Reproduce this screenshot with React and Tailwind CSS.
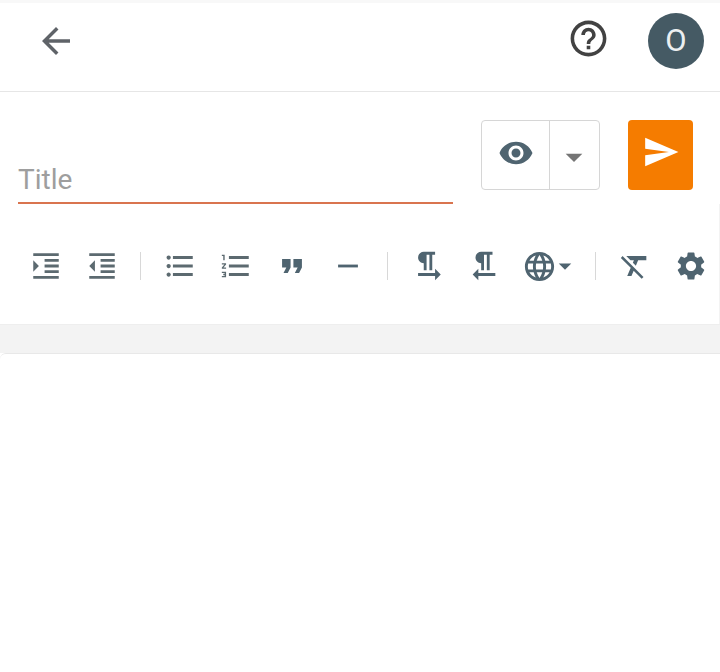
import React from 'react';

// Material icon paths
const icons = {
    back: 'M20 11H7.83l5.59-5.59L12 4l-8 8 8 8 1.41-1.41L7.83 13H20v-2z',
    help: 'M11 18h2v-2h-2v2zm1-16C6.48 2 2 6.48 2 12s4.48 10 10 10 10-4.48 10-10S17.52 2 12 2zm0 18c-4.41 0-8-3.59-8-8s3.59-8 8-8 8 3.59 8 8-3.59 8-8 8zm0-14c-2.21 0-4 1.79-4 4h2c0-1.1.9-2 2-2s2 .9 2 2c0 2-3 1.75-3 5h2c0-2.25 3-2.5 3-5 0-2.21-1.79-4-4-4z',
    eye: 'M12 4.5C7 4.5 2.73 7.61 1 12c1.73 4.39 6 7.5 11 7.5s9.27-3.11 11-7.5c-1.73-4.39-6-7.5-11-7.5zM12 17c-2.76 0-5-2.24-5-5s2.24-5 5-5 5 2.24 5 5-2.24 5-5 5zm0-8c-1.66 0-3 1.34-3 3s1.34 3 3 3 3-1.34 3-3-1.34-3-3-3z',
    caret: 'M7 10l5 5 5-5z',
    send: 'M2.01 21L23 12 2.01 3 2 10l15 2-15 2z',
    indent: 'M3 21h18v-2H3v2zM3 8v8l4-4-4-4zm8 9h10v-2H11v2zM3 3v2h18V3H3zm8 6h10V7H11v2zm0 4h10v-2H11v2z',
    outdent: 'M11 17h10v-2H11v2zm-8-5l4 4V8l-4 4zm0 9h18v-2H3v2zM3 3v2h18V3H3zm8 6h10V7H11v2zm0 4h10v-2H11v2z',
    bullets: 'M4 10.5c-.83 0-1.5.67-1.5 1.5s.67 1.5 1.5 1.5 1.5-.67 1.5-1.5-.67-1.5-1.5-1.5zm0-6c-.83 0-1.5.67-1.5 1.5S3.17 7.5 4 7.5 5.5 6.83 5.5 6 4.83 4.5 4 4.5zm0 12c-.83 0-1.5.68-1.5 1.5s.68 1.5 1.5 1.5 1.5-.68 1.5-1.5-.67-1.5-1.5-1.5zM7 19h14v-2H7v2zm0-6h14v-2H7v2zm0-8v2h14V5H7z',
    numbers: 'M2 17h2v.5H3v1h1v.5H2v1h3v-4H2v1zm1-9h1V4H2v1h1v3zm-1 3h1.8L2 13.1v.9h3v-1H3.2L5 10.9V10H2v1zm5-6v2h14V5H7zm0 14h14v-2H7v2zm0-6h14v-2H7v2z',
    quote: 'M6 17h3l2-4V7H5v6h3zm8 0h3l2-4V7h-6v6h3z',
    rule: 'M5 11h14v2H5z',
    ltr: 'M9 10v5h2V4h2v11h2V4h2V2H9C6.79 2 5 3.79 5 6s1.79 4 4 4zm12 8l-4-4v3H5v2h12v3l4-4z',
    rtl: 'M10 10v5h2V4h2v11h2V4h2V2h-8C7.79 2 6 3.79 6 6s1.79 4 4 4zm-2 7v-3l-4 4 4 4v-3h12v-2H8z',
    globe: 'M11.99 2C6.47 2 2 6.48 2 12s4.47 10 9.99 10C17.52 22 22 17.52 22 12S17.52 2 11.99 2zm6.93 6h-2.95c-.32-1.25-.78-2.45-1.38-3.56 1.84.63 3.37 1.91 4.33 3.56zM12 4.04c.83 1.2 1.48 2.53 1.91 3.96h-3.82c.43-1.43 1.08-2.76 1.91-3.96zM4.26 14C4.1 13.36 4 12.69 4 12s.1-1.36.26-2h3.38c-.08.66-.14 1.32-.14 2 0 .68.06 1.34.14 2H4.26zm.82 2h2.95c.32 1.25.78 2.45 1.38 3.56-1.84-.63-3.37-1.9-4.33-3.56zm2.95-8H5.08c.96-1.66 2.49-2.93 4.33-3.56C8.81 5.55 8.35 6.75 8.03 8zM12 19.96c-.83-1.2-1.48-2.53-1.91-3.96h3.82c-.43 1.43-1.08 2.76-1.91 3.96zM14.34 14H9.66c-.09-.66-.16-1.32-.16-2 0-.68.07-1.35.16-2h4.68c.09.65.16 1.32.16 2 0 .68-.07 1.34-.16 2zm.25 5.56c.6-1.11 1.06-2.31 1.38-3.56h2.95c-.96 1.65-2.49 2.93-4.33 3.56zM16.36 14c.08-.66.14-1.32.14-2 0-.68-.06-1.34-.14-2h3.38c.16.64.26 1.31.26 2s-.1 1.36-.26 2h-3.38z',
    clear: 'M3.27 5L2 6.27l6.97 6.97L6.5 19h3l1.57-3.66L16.73 21 18 19.73 3.55 5.27 3.27 5zM6 5v.18L8.82 8h2.4l-.72 1.68 2.1 2.1L14.21 8H20V5H6z',
    gear: 'M19.14 12.94c.04-.3.06-.61.06-.94 0-.32-.02-.64-.07-.94l2.03-1.58c.18-.14.23-.41.12-.61l-1.92-3.32c-.12-.22-.37-.29-.59-.22l-2.39.96c-.5-.38-1.03-.7-1.62-.94l-.36-2.54c-.04-.24-.24-.41-.48-.41h-3.84c-.24 0-.43.17-.47.41l-.36 2.54c-.59.24-1.13.57-1.62.94l-2.39-.96c-.22-.08-.47 0-.59.22L2.74 8.87c-.12.21-.08.47.12.61l2.03 1.58c-.05.3-.09.63-.09.94s.02.64.07.94l-2.03 1.58c-.18.14-.23.41-.12.61l1.92 3.32c.12.22.37.29.59.22l2.39-.96c.5.38 1.03.7 1.62.94l.36 2.54c.05.24.24.41.48.41h3.84c.24 0 .44-.17.47-.41l.36-2.54c.59-.24 1.13-.56 1.62-.94l2.39.96c.22.08.47 0 .59-.22l1.92-3.32c.12-.22.07-.47-.12-.61l-2.01-1.58zM12 15.6c-1.98 0-3.6-1.62-3.6-3.6s1.62-3.6 3.6-3.6 3.6 1.62 3.6 3.6-1.62 3.6-3.6 3.6z',
};

const Icon = ({ name, className }) => (
    <svg viewBox="0 0 24 24" fill="currentColor" className={className}>
        <path d={icons[name]} />
    </svg>
);

const ToolButton = ({ name, tone = 'text-[#4f6470]' }) => (
    <button className={"w-14 h-14 flex items-center justify-center " + tone}>
        <Icon name={name} className="w-[34px] h-[34px]" />
    </button>
);

const Divider = ({ className }) => <div className={"w-px h-7 bg-[#d8d8d8] " + className}></div>;

const App = () => {
    return (
        <div className="min-h-screen bg-white font-['Roboto',sans-serif]">
            {/* top bar */}
            <header className="h-[92px] border-t-[3px] border-b border-t-[#f8f8f8] border-b-[#e6e6e6] flex justify-between items-start pt-[17px] pl-[35px] pr-4">
                <Icon name="back" className="w-[42px] h-[42px] text-[#5f6368]" />
                <div className="flex items-start gap-[38px]">
                    <Icon name="help" className="w-[43px] h-[43px] -mt-[3px] text-[#424242]" />
                    <div className="w-14 h-14 -mt-[7px] rounded-full bg-[#455a64] text-[#eceff1] text-[31px] flex items-center justify-center">O</div>
                </div>
            </header>

            {/* title and actions */}
            <div className="flex items-start pt-7 pl-[18px]">
                <div className="w-[435px] h-[84px] border-b-2 border-[#d9744f] flex flex-col justify-end">
                    <div className="text-[28px] leading-[33px] mb-[6px] text-[#9e9e9e]">Title</div>
                </div>
                <div className="ml-7 w-[119px] h-[70px] border border-[#d6d6d6] rounded flex">
                    <div className="w-[68px] flex items-center justify-center border-r border-[#d6d6d6] pb-1 text-[#4f6470]">
                        <Icon name="eye" className="w-9 h-9" />
                    </div>
                    <div className="flex-1 flex items-center justify-center pt-1 pr-[2px] text-[#757575]">
                        <Icon name="caret" className="w-10 h-10" />
                    </div>
                </div>
                <button className="ml-7 w-[65px] h-[70px] bg-[#f57c00] rounded flex items-center justify-center pb-[6px] text-white">
                    <Icon name="send" className="w-[38px] h-[38px]" />
                </button>
            </div>

            {/* formatting toolbar */}
            <div className="h-[120px] pt-[34px] pl-[18px] flex items-start border-r border-[#f3f3f3]">
                <ToolButton name="indent" tone="text-[#5c6a70]" />
                <ToolButton name="outdent" tone="text-[#5c6a70]" />
                <Divider className="ml-[10px] mr-[11px] mt-[14px]" />
                <ToolButton name="bullets" tone="text-[#5c6a70]" />
                <ToolButton name="numbers" tone="text-[#5c6a70]" />
                <ToolButton name="quote" />
                <ToolButton name="rule" />
                <Divider className="ml-[11px] mr-[12px] mt-[14px]" />
                <ToolButton name="ltr" />
                <ToolButton name="rtl" />
                <button className="w-[72px] h-14 flex items-center pl-[10px] text-[#4f6470]">
                    <Icon name="globe" className="w-[35px] h-[35px] shrink-0" />
                    <Icon name="caret" className="w-[30px] h-[30px] -ml-[7px] shrink-0" />
                </button>
                <Divider className="ml-[11px] mr-[11px] mt-[14px]" />
                <ToolButton name="clear" />
                <ToolButton name="gear" />
            </div>

            {/* editor area */}
            <div className="h-[29px] bg-[#f3f3f3] border-t border-[#eeeeee]"></div>
            <div className="h-[319px] bg-white border-t border-[#e8e8e8] rounded-tl-md"></div>
        </div>
    );
};

export default App;
